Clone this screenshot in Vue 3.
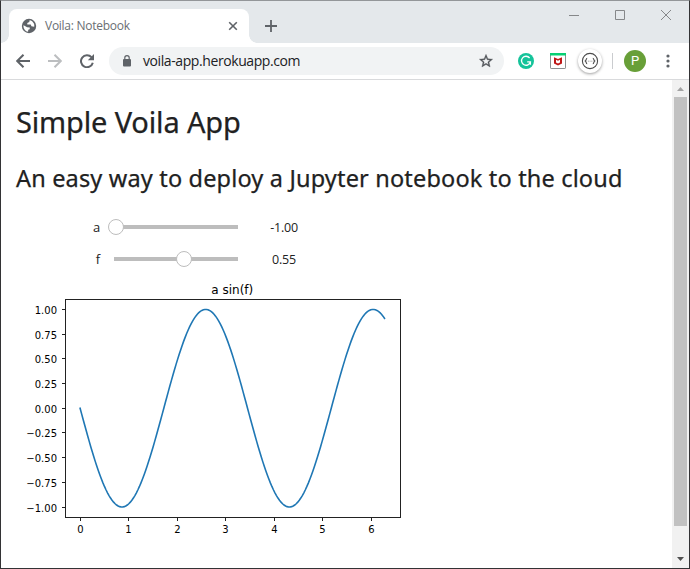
<script setup>
import { ref, computed } from 'vue'

const sliders = ref([
  { label: 'a', value: '-1.00', pos: 0 },
  { label: 'f', value: '0.55', pos: 55 },
])

const X0 = 80.1
const XS = 48.45
const Y0 = 408.2 - 280
const YS = 98.8
const yTicks = [1, 0.75, 0.5, 0.25, 0, -0.25, -0.5, -0.75, -1].map((v) => ({
  y: Math.round(Y0 - v * YS - 0.5) + 0.5,
  text: (v < 0 ? '−' : '') + Math.abs(v).toFixed(2),
}))
const xTicks = [0, 1, 2, 3, 4, 5, 6].map((v) => ({ x: Math.floor(80.2 + v * 48.5) + 0.5, text: v }))

const curve = computed(() => {
  const pts = []
  for (let i = 0; i <= 200; i++) {
    const x = (i / 200) * 2 * Math.PI
    pts.push(`${(X0 + x * XS).toFixed(2)},${(Y0 + Math.sin(x / 0.55) * YS).toFixed(2)}`)
  }
  return pts.join(' ')
})
</script>

<template>
  <div class="window">
    <header class="strip">
      <div class="tab">
        <svg class="globe" width="16" height="16" viewBox="0 0 16 16">
          <circle cx="8" cy="8" r="7.2" fill="#5f6368" />
          <path d="M2.6 7.2 6.1 9.2 8.8 9.5 8.7 11.2 7.2 11.8 7.1 13.8C4.4 13.4 2.4 11 2.4 8ZM8.6 2.3 8.3 4 6.3 5 6.3 6.4 9.8 6.5 10.4 8.3 13.2 8.8C13.9 6 11.8 2.8 8.6 2.3Z" fill="#fff" />
        </svg>
        <span class="tab-title">Voila: Notebook</span>
        <svg width="10" height="10" viewBox="0 0 10 10"><path d="M1.2 1.2 8.8 8.8M8.8 1.2 1.2 8.8" stroke="#5f6368" stroke-width="1.6" /></svg>
      </div>
      <svg class="plus" width="12" height="12" viewBox="0 0 12 12"><path d="M6 0V12M0 6H12" stroke="#5f6368" stroke-width="1.8" /></svg>
      <div class="controls">
        <svg width="10" height="10" viewBox="0 0 10 10"><path d="M0 5.5H10" /></svg>
        <svg width="10" height="10" viewBox="0 0 10 10"><path d="M.5 .5H9.5V9.5H.5Z" /></svg>
        <svg width="10" height="10" viewBox="0 0 10 10"><path d="M0 0 10 10M10 0 0 10" /></svg>
      </div>
    </header>

    <nav class="toolbar">
      <svg class="nav" width="14" height="14" viewBox="0 0 14 14"><path d="M14 7H1.4M7.5 .7 1.2 7 7.5 13.3" stroke="#5f6368" /></svg>
      <svg class="nav" width="14" height="14" viewBox="0 0 14 14"><path d="M0 7H12.6M6.5 .7 12.8 7 6.5 13.3" stroke="#bcbec0" /></svg>
      <svg class="nav" width="14" height="14" viewBox="0 0 14 14">
        <path d="M11.5 3.2A6 6 0 1 0 12.8 8.7" stroke="#5f6368" />
        <polygon points="14,0 14,6.2 7.8,6.2" fill="#5f6368" />
      </svg>
      <div class="omnibox">
        <svg width="8" height="12" viewBox="0 0 8 12">
          <rect y="4" width="8" height="7.5" rx="1" fill="#5f6368" />
          <path d="M1.8 4.5V2.8a2.2 2.2 0 0 1 4.4 0V4.5" fill="none" stroke="#5f6368" stroke-width="1.2" />
        </svg>
        <span class="url">voila-app.herokuapp.com</span>
        <svg width="16" height="16" viewBox="0 0 24 24">
          <path d="M22 9.24l-7.19-.62L12 2 9.19 8.63 2 9.24l5.46 4.73L5.82 21 12 17.27 18.18 21l-1.63-7.03L22 9.24zM12 15.4l-3.76 2.27 1-4.28-3.32-2.88 4.38-.38L12 6.1l1.71 4.04 4.38.38-3.32 2.88 1 4.28L12 15.4z" fill="#4f5357" stroke="#4f5357" stroke-width=".5" />
        </svg>
      </div>
      <svg class="grammarly" width="16" height="16" viewBox="0 0 16 16">
        <circle cx="8" cy="8" r="8" fill="#15c39a" />
        <path d="M11.6 5A4.5 4.5 0 1 0 12.4 8.8H9.2M12.4 8.8V11.8" fill="none" stroke="#fff" stroke-width="1.3" />
      </svg>
      <svg class="shield" width="16" height="16" viewBox="0 0 16 16">
        <rect x=".5" y=".5" width="15" height="15" rx=".6" fill="#fff" stroke="#8d8f91" />
        <rect width="16" height="2.5" fill="#06d073" />
        <path d="M4 4.3 8 6.1 12 4.3V10.4L8 12.6 4 10.4Z" fill="#c01818" />
        <path d="M6 6.7 8 7.8 10 6.7V9.4L8 10.5 6 9.4Z" fill="#fff" />
      </svg>
      <div class="badge">
        <svg width="18" height="18" viewBox="0 0 18 18" fill="none" stroke="#4c4c4c">
          <circle cx="9" cy="9" r="7.6" stroke-width="1.1" />
          <path d="M6.2 6.2C4.9 6.2 5.6 8.2 4.3 9 5.6 9.8 4.9 11.8 6.2 11.8M11.8 6.2C13.1 6.2 12.4 8.2 13.7 9 12.4 9.8 13.1 11.8 11.8 11.8" stroke-width="1.1" />
          <path d="M6.9 9.2H11.3" stroke-dasharray="1 .7" stroke-width=".8" stroke="#888" />
        </svg>
      </div>
      <i class="rule"></i>
      <div class="avatar">P</div>
      <svg class="menu" width="4" height="14" viewBox="0 0 4 14" fill="#5f6368"><circle cx="2" cy="2" r="1.6" /><circle cx="2" cy="7" r="1.6" /><circle cx="2" cy="12" r="1.6" /></svg>
    </nav>

    <div class="body">
      <main class="page">
        <h1>Simple Voila App</h1>
        <h2>An easy way to deploy a Jupyter notebook to the cloud</h2>
        <div v-for="s in sliders" :key="s.label" class="row">
          <span class="label">{{ s.label }}</span>
          <div class="track"><i class="knob" :style="{ left: s.pos + '%' }"></i></div>
          <span class="value">{{ s.value }}</span>
        </div>
        <svg class="chart" width="420" height="260" viewBox="1 0 420 260">
          <text class="title" x="232.3" y="14" text-anchor="middle">a sin(f)</text>
          <polyline :points="curve" fill="none" stroke="#1f77b4" stroke-width="1.6" stroke-linecap="square" stroke-linejoin="round" />
          <rect x="65.5" y="19.5" width="335" height="218" fill="none" stroke="#222" />
          <g v-for="t in yTicks" :key="t.text">
            <path :d="`M62 ${t.y}H65`" stroke="#222" />
            <text x="57" :y="t.y + 4" text-anchor="end">{{ t.text }}</text>
          </g>
          <g v-for="t in xTicks" :key="t.text">
            <path :d="`M${t.x} 238V241`" stroke="#222" />
            <text :x="t.x" y="252.5" text-anchor="middle">{{ t.text }}</text>
          </g>
        </svg>
      </main>
      <aside class="scrollbar">
        <svg width="7" height="4" viewBox="0 0 7 4"><path d="M0 4 3.5 0 7 4Z" fill="#a3a3a3" /></svg>
        <div class="thumb"></div>
        <svg width="7" height="4" viewBox="0 0 7 4"><path d="M0 0H7L3.5 4Z" fill="#505050" /></svg>
      </aside>
    </div>
  </div>
</template>

<style>
body { margin: 0; overflow: hidden; background: #fff; }
</style>

<style scoped>
* { box-sizing: border-box; }
svg { display: block; flex: none; }
.window {
  width: 690px;
  height: 569px;
  display: flex;
  flex-direction: column;
  border: 1px solid #333335;
  border-top-color: #939699;
  background: #fff;
  font-family: "Open Sans", "Noto Sans", sans-serif;
}
.strip { height: 42px; flex: none; display: flex; padding: 8px 18px 0 8px; background: #e4e8eb; }
.tab {
  position: relative;
  width: 240px;
  height: 34px;
  display: flex;
  align-items: center;
  padding: 0 11px 0 12px;
  border-radius: 8px 8px 0 0;
  background: #fff;
}
.tab::before, .tab::after { content: ""; position: absolute; bottom: 0; width: 8px; height: 8px; }
.tab::before { left: -8px; background: radial-gradient(circle at 0 0, transparent 7.5px, #fff 8px); }
.tab::after { right: -8px; background: radial-gradient(circle at 100% 0, transparent 7.5px, #fff 8px); }
.tab-title { flex: 1; margin: -1px 0 0 8px; font-size: 12px; color: #6a6e73; white-space: nowrap; letter-spacing: -0.27px; }
.plus { margin: 11px 0 0 16px; }
.controls { margin-left: auto; display: flex; gap: 36px; padding-top: 1px; }
.controls path { fill: none; stroke: #858789; }
.toolbar { height: 37px; flex: none; display: flex; align-items: center; padding: 0 14px 1px 15px; border-bottom: 1px solid #d9dadc; }
.nav { margin-right: 18px; }
.nav path { fill: none; stroke-width: 2; }
.omnibox { width: 395px; height: 28px; margin-left: -3px; padding: 0 10px 0 14px; display: flex; align-items: center; border-radius: 14px; background: #f1f3f4; }
.url { flex: 1; margin-left: 12px; font-size: 14px; color: #202124; letter-spacing: -0.41px; }
.grammarly { margin-left: 14px; }
.shield { margin-left: 16px; }
.badge { width: 24px; height: 24px; margin-left: 12px; display: grid; place-items: center; border-radius: 50%; background: #fff; box-shadow: 0 1px 3px rgba(0, 0, 0, .38); }
.rule { width: 1px; height: 16px; margin-left: 10px; background: #cacccf; }
.avatar { width: 22px; height: 22px; margin-left: 11px; display: grid; place-items: center; border-radius: 50%; background: #689f38; color: #fff; font: 13px Roboto, sans-serif; }
.menu { margin-left: auto; margin-right: 5px; }
.body { flex: 1; min-height: 0; display: flex; }
.page { flex: 1; padding: 20px 0 0 15px; color: #212121; overflow: hidden; }
h1, h2 { margin: 0; font-family: "Noto Sans", "Open Sans", sans-serif; font-weight: 400; white-space: nowrap; -webkit-text-stroke: .25px #212121; }
h1 { font-size: 29px; line-height: 44px; letter-spacing: -0.15px; }
h2 { margin-top: 16px; font-size: 23.5px; line-height: 36px; letter-spacing: 0.17px; }
.row { height: 32px; display: flex; align-items: center; font-size: 13px; color: #222; }
.row .label { width: 84px; text-align: right; letter-spacing: -0.1px; }
h2 + .row { margin-top: 15px; }
.track { position: relative; width: 124px; height: 4px; margin-left: 14px; background: #bdbdbd; }
.knob { position: absolute; top: -6px; width: 16px; height: 16px; margin-left: -6px; border: 1px solid #bdbdbd; border-radius: 50%; background: #fff; }
.value { width: 92px; text-align: center; font-size: 12.5px; letter-spacing: -0.2px; }
.chart { margin: 5px 0 0 -15px; font-family: "DejaVu Sans", sans-serif; font-size: 10px; }
.title { font-size: 12px; }
.scrollbar { width: 17px; flex: none; display: flex; flex-direction: column; align-items: center; padding: 7px 0 7px; background: #f1f1f1; }
.thumb { width: 13px; height: 429px; margin: 6px 0 auto; background: #c1c1c1; }
</style>
